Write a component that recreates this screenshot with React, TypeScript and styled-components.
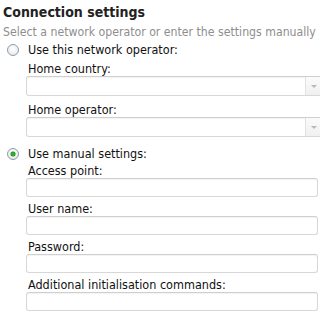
import React from "react";
import styled, { createGlobalStyle } from "styled-components";

const GlobalStyle = createGlobalStyle`
  html, body {
    margin: 0;
    padding: 0;
    background: #ffffff;
  }
`;

const Page = styled.div`
  width: 320px;
  height: 320px;
  overflow: hidden;
  box-sizing: border-box;
  padding-left: 3px;
  background: #ffffff;
  font-family: "DejaVu Sans Condensed", "DejaVu Sans", "Liberation Sans", sans-serif;
  font-size: 12.5px;
  color: #111111;
`;

const Title = styled.div`
  padding-top: 2px;
  font-size: 14px;
  line-height: 20px;
  font-weight: bold;
  color: #222222;
`;

const Subtitle = styled.div`
  margin-top: 2px;
  font-size: 12.2px;
  line-height: 16px;
  color: #8e8e8e;
  white-space: nowrap;
`;

const Row = styled.div<{ $top: number }>`
  display: flex;
  align-items: center;
  gap: 9px;
  margin-top: ${(p) => p.$top}px;
  height: 18px;
  line-height: 18px;
`;

const Radio = styled.span<{ $checked?: boolean }>`
  position: relative;
  box-sizing: border-box;
  width: 12px;
  height: 12px;
  margin-left: 4px;
  border-radius: 50%;
  border: 1px solid #8d9bb0;
  background: radial-gradient(circle at 50% 40%, #ffffff 0%, #f1f1f1 55%, #d9dde3 100%);

  &::after {
    content: "";
    display: ${(p) => (p.$checked ? "block" : "none")};
    position: absolute;
    left: 3px;
    top: 3px;
    width: 4px;
    height: 4px;
    border-radius: 50%;
    background: #29b52c;
    box-shadow: 0 0 0 0.5px #1d7a20;
  }
`;

const Fields = styled.div`
  margin-left: 23px;
`;

const Label = styled.div<{ $top: number }>`
  margin-top: ${(p) => p.$top}px;
  padding-left: 2px;
  line-height: 14px;
  white-space: nowrap;
`;

const Box = styled.div<{ $select?: boolean }>`
  position: relative;
  box-sizing: border-box;
  height: ${(p) => (p.$select ? 20 : 19)}px;
  margin-right: ${(p) => (p.$select ? -4 : 2)}px;
  border: 1px solid #d7d7d7;
  border-top-color: #cfcfcf;
  border-radius: 3px;
  background: #ffffff;
  box-shadow: inset 0 1px 1px rgba(0, 0, 0, 0.05);
  display: flex;
  justify-content: flex-end;
`;

const DropButton = styled.div`
  width: 15px;
  border-left: 1px solid #e2e2e2;
  background: linear-gradient(#fbfbfb, #f0f0f0);
  display: flex;
  align-items: center;
  justify-content: center;
  padding-right: 2px;
`;

const Arrow = styled.span`
  width: 0;
  height: 0;
  border-left: 3px solid transparent;
  border-right: 3px solid transparent;
  border-top: 3px solid #b9b9b9;
`;

type FieldProps = { label: string; top: number; select?: boolean };

const Field = ({ label, top, select }: FieldProps) => (
  <>
    <Label $top={top}>{label}</Label>
    <Box $select={select}>
      {select && (
        <DropButton>
          <Arrow />
        </DropButton>
      )}
    </Box>
  </>
);

const App = () => {
  return (
    <>
      <GlobalStyle />
      <Page>
        <Title>Connection settings</Title>
        <Subtitle>Select a network operator or enter the settings manually</Subtitle>

        <Row $top={1}>
          <Radio />
          <span>Use this network operator:</span>
        </Row>
        <Fields>
          <Field label="Home country:" top={3} select />
          <Field label="Home operator:" top={7} select />
        </Fields>

        <Row $top={8}>
          <Radio $checked />
          <span>Use manual settings:</span>
        </Row>
        <Fields>
          <Field label="Access point:" top={1} />
          <Field label="User name:" top={5} />
          <Field label="Password:" top={5} />
          <Field label="Additional initialisation commands:" top={5} />
        </Fields>
      </Page>
    </>
  );
};

export default App;
